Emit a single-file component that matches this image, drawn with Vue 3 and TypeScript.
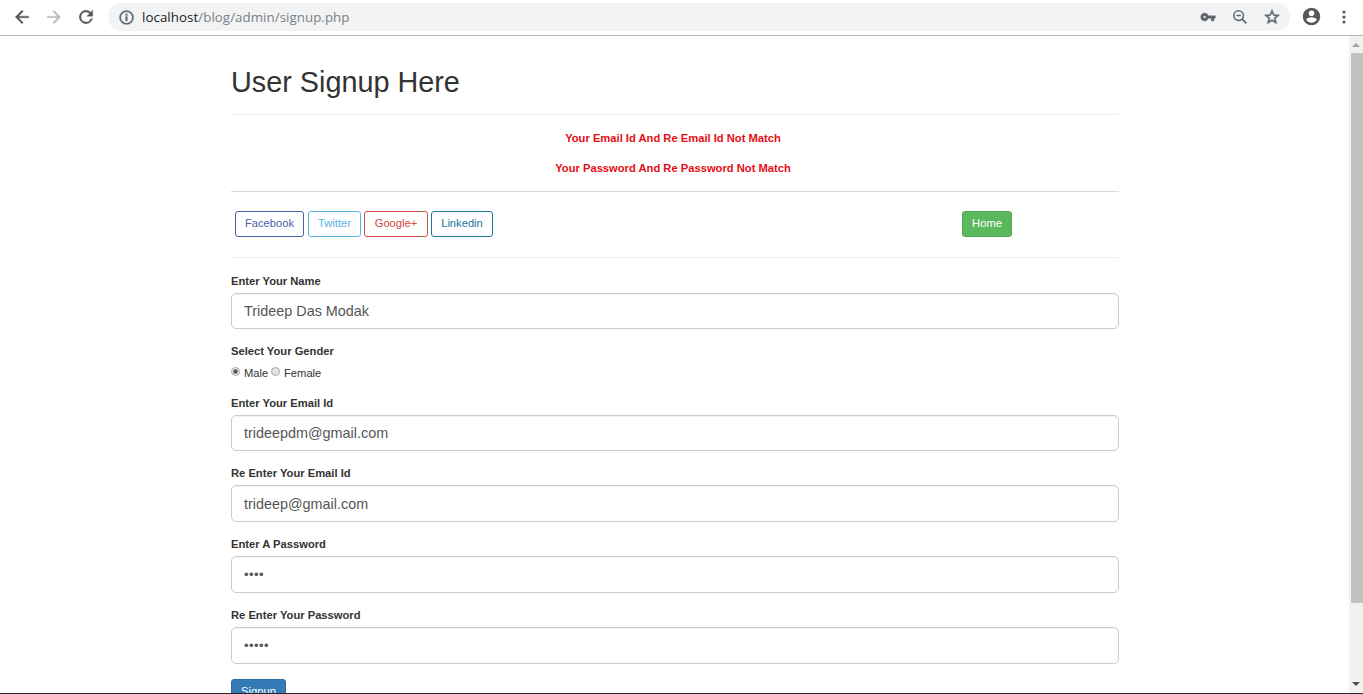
<script setup lang="ts">
import { ref } from 'vue'

interface Social {
  label: string
  kind: string
}

const socials: Social[] = [
  { label: 'Facebook', kind: 'facebook' },
  { label: 'Twitter', kind: 'twitter' },
  { label: 'Google+', kind: 'google' },
  { label: 'Linkedin', kind: 'linkedin' },
]

const fullName = ref('Trideep Das Modak')
const gender = ref('male')
const email = ref('trideepdm@gmail.com')
const emailAgain = ref('trideep@gmail.com')
const password = '••••'
const passwordAgain = '•••••'
</script>

<template>
  <div class="window">
    <header class="toolbar">
      <svg class="nav" viewBox="0 0 24 24"><path fill="#54575b" d="M20 11H7.8l5.6-5.6L12 4l-8 8 8 8 1.4-1.4L7.8 13H20z" stroke="#54575b" stroke-width=".5" /></svg>
      <svg class="nav fwd" viewBox="0 0 24 24"><path fill="#b9bbbe" stroke="#b9bbbe" stroke-width=".4" d="M4 11h12.2l-5.6-5.6L12 4l8 8-8 8-1.4-1.4 5.6-5.6H4z" /></svg>
      <svg class="nav reload" viewBox="0 0 24 24"><path fill="#54575b" stroke="#54575b" stroke-width=".5" d="M17.65 6.35A8 8 0 1 0 19.73 14h-2.08A6 6 0 1 1 12 6c1.66 0 3.14.69 4.22 1.78L13 11h7V4z" /></svg>
      <div class="address">
        <svg class="info" viewBox="0 0 24 24"><path fill="#5f6368" stroke="#5f6368" stroke-width=".4" d="M10.8 10.6h2.4v6.4h-2.4zM10.8 6.8h2.4v2.4h-2.4zM12 2a10 10 0 1 0 0 20 10 10 0 0 0 0-20zm0 18a8 8 0 1 1 0-16 8 8 0 0 1 0 16z" /></svg>
        <span class="url"><b>localhost</b>/blog/admin/signup.php</span>
        <svg class="key" viewBox="0 0 24 24"><path fill="#5f6368" stroke="#5f6368" stroke-width=".5" d="M12.65 10A6 6 0 1 0 12.65 14H17v4h4v-4h2v-4zM7 14a2 2 0 1 1 0-4 2 2 0 0 1 0 4z" /></svg>
        <svg class="mag" viewBox="0 0 16 16"><g fill="none" stroke="#5f6368" stroke-width="1.5"><circle cx="6.6" cy="6.6" r="4.8" /><path d="m10.1 10.1 4.3 4.3M4.4 6.6h4.4" /></g></svg>
        <svg class="star" viewBox="0 0 24 24"><path fill="#5f6368" stroke="#5f6368" stroke-width=".6" d="m22 9.24-7.19-.62L12 2 9.19 8.63 2 9.24l5.46 4.73L5.82 21 12 17.27 18.18 21l-1.63-7.03zM12 15.4l-3.76 2.27 1-4.28-3.32-2.88 4.38-.38L12 6.1l1.71 4.04 4.38.38-3.32 2.88 1 4.28z" /></svg>
      </div>
      <svg class="avatar" viewBox="0 0 24 24"><path fill="#54575b" d="M12 2a10 10 0 1 0 0 20 10 10 0 0 0 0-20zm0 3a3.2 3.2 0 1 1 0 6.4A3.2 3.2 0 0 1 12 5zm0 14.2a7.2 7.2 0 0 1-6-3.22c.03-1.99 4-3.08 6-3.08s5.97 1.09 6 3.08a7.2 7.2 0 0 1-6 3.22z" /></svg>
      <svg class="more" viewBox="0 0 4 14"><g fill="#54575b"><circle cx="2" cy="2" r="1.6" /><circle cx="2" cy="7" r="1.6" /><circle cx="2" cy="12" r="1.6" /></g></svg>
    </header>

    <div class="viewport">
      <main class="page">
        <h1><span>User Signup Here</span></h1>
        <div class="errors">
          <p>Your Email Id And Re Email Id Not Match</p>
          <p>Your Password And Re Password Not Match</p>
        </div>
        <div class="links">
          <div class="socials">
            <button v-for="s in socials" :key="s.kind" type="button" class="btn" :class="s.kind">{{ s.label }}</button>
          </div>
          <button type="button" class="btn home">Home</button>
        </div>
        <form @submit.prevent>
          <div class="group name">
            <label>Enter Your Name</label>
            <input v-model="fullName" class="control" type="text" />
          </div>
          <div class="group gender">
            <label>Select Your Gender</label>
            <div class="radios">
              <i class="radio" :class="{ on: gender === 'male' }" @click="gender = 'male'"></i><span class="male">Male</span>
              <i class="radio" :class="{ on: gender === 'female' }" @click="gender = 'female'"></i><span>Female</span>
            </div>
          </div>
          <div class="group email">
            <label>Enter Your Email Id</label>
            <input v-model="email" class="control" type="text" />
          </div>
          <div class="group email2">
            <label>Re Enter Your Email Id</label>
            <input v-model="emailAgain" class="control" type="text" />
          </div>
          <div class="group pass">
            <label>Enter A Password</label>
            <div class="control dots">{{ password }}</div>
          </div>
          <div class="group pass2">
            <label>Re Enter Your Password</label>
            <div class="control dots">{{ passwordAgain }}</div>
          </div>
          <button type="submit" class="btn signup">Signup</button>
        </form>
      </main>
      <aside class="scrollbar">
        <svg class="arrow" viewBox="0 0 14 17"><path fill="#a3a3a3" d="M3 11h8L7 7z" /></svg>
        <div class="thumb"></div>
        <svg class="arrow down" viewBox="0 0 14 17"><path fill="#505050" d="M3 6h8l-4 4z" /></svg>
      </aside>
    </div>
    <div class="edge"></div>
  </div>
</template>

<style>
body {
  margin: 0;
  overflow: hidden;
}
</style>

<style scoped>
* {
  box-sizing: border-box;
}
.window {
  width: 1363px;
  height: 694px;
  display: flex;
  flex-direction: column;
  overflow: hidden;
  background: #fff;
  color: #333;
  font-family: 'Liberation Sans', Arial, sans-serif;
  font-size: 11.2px;
}
svg {
  display: block;
  flex: none;
}
.toolbar {
  flex: none;
  height: 36px;
  border-bottom: 1px solid #b4b5b7;
  display: flex;
  align-items: flex-start;
  padding: 3px 0 0 12px;
}
.nav {
  width: 20px;
  height: 20px;
  margin: 4px 12px 0 0;
}
.reload {
  margin-right: 12px;
}
.address {
  width: 1182px;
  height: 28px;
  border-radius: 14px;
  background: #f1f3f4;
  display: flex;
  align-items: center;
}
.info {
  width: 17px;
  height: 17px;
  margin-left: 9.5px;
}
.url {
  flex: 1;
  margin-left: 7.5px;
  font-family: 'Open Sans', 'Noto Sans', sans-serif;
  font-size: 13.3px;
  letter-spacing: 0.06px;
  line-height: 28px;
  color: #7b7f83;
  white-space: nowrap;
}
.url b {
  font-weight: 400;
  color: #202124;
}
.key {
  width: 16px;
  height: 16px;
}
.mag {
  width: 16px;
  height: 16px;
  margin-left: 16px;
}
.star {
  width: 18px;
  height: 18px;
  margin: 0 9px 0 15px;
}
.avatar {
  width: 21px;
  height: 21px;
  margin: 3px 0 0 11px;
}
.more {
  width: 4px;
  height: 14px;
  margin: 7px 0 0 20px;
}
.viewport {
  flex: 1;
  min-height: 0;
  display: flex;
  overflow: hidden;
}
.page {
  flex: 1;
  padding-left: 231px;
}
.page > * {
  width: 888px;
}
h1 {
  margin: 0;
  height: 79px;
  padding-top: 30px;
  border-bottom: 1px solid #eee;
  font-size: 28.8px;
  font-weight: 400;
  line-height: 32px;
}
.errors {
  height: 77px;
  padding-top: 15px;
  border-bottom: 1px solid #d9d9d9;
  text-align: center;
  font-weight: 700;
  color: #e60d14;
}
.errors p {
  margin: 0 4px 14px 0;
  line-height: 16px;
  white-space: nowrap;
}
.links {
  height: 66px;
  padding: 19px 107px 0 4px;
  border-bottom: 1px solid #eee;
  display: flex;
  justify-content: space-between;
  align-items: flex-start;
}
.socials {
  display: flex;
}
.btn {
  height: 26px;
  padding: 0 0 2px;
  border: 1px solid;
  border-radius: 3px;
  background: #fff;
  font: 11.2px/22px 'Liberation Sans', Arial, sans-serif;
  text-align: center;
}
.facebook {
  width: 69px;
  color: #4c5fa5;
  margin-right: 4px;
}
.twitter {
  width: 53px;
  color: #55b5e0;
  margin-right: 3px;
}
.google {
  width: 64px;
  color: #cf4a41;
  margin-right: 3px;
}
.linkedin {
  width: 62px;
  color: #1a789c;
}
.home {
  width: 50px;
  background: #5cb85c;
  border-color: #4cae4c;
  color: #fff;
}
.group label {
  display: block;
  height: 20px;
  line-height: 16px;
  font-weight: 700;
  white-space: nowrap;
}
.control {
  display: block;
  width: 100%;
  height: 36px;
  padding: 0 12px;
  border: 1px solid #ccc;
  border-radius: 5px;
  background: #fff;
  box-shadow: inset 0 1px 1px rgba(0, 0, 0, 0.06);
  outline: none;
  font: 14.4px/34px 'Liberation Sans', Arial, sans-serif;
  color: #555;
}
form {
  padding-top: 15px;
}
.name {
  height: 70px;
}
.gender {
  height: 52px;
}
.email {
  height: 70px;
}
.email2,
.pass,
.pass2 {
  height: 71px;
}
.pass .control,
.pass2 .control,
.email2 .control {
  height: 37px;
}
.email2 .control {
  line-height: 35px;
}
.dots {
  font-size: 13px;
  letter-spacing: 0.45px;
  line-height: 36px;
}
.radios {
  display: flex;
  align-items: center;
  height: 16px;
  margin-top: 2px;
}
.radio {
  width: 9px;
  height: 9px;
  margin-bottom: 3px;
  border: 1px solid #a5a5a5;
  border-radius: 50%;
  background: #e4e4e4;
}
.radio.on {
  background: radial-gradient(circle, #555 0 1.8px, #e8e8e8 2.6px);
}
.radios span {
  margin-left: 4px;
}
.radios .male {
  width: 24px;
  margin-right: 3px;
}
.signup {
  display: block;
  width: 55px;
  margin-top: 1px;
  background: #337ab7;
  border-color: #2e6da4;
  color: #fff;
}
.scrollbar {
  width: 14px;
  background: #f1f1f1;
  display: flex;
  flex-direction: column;
}
.arrow {
  width: 14px;
  height: 17px;
}
.thumb {
  height: 550px;
  margin-left: 2px;
  background: #c1c1c1;
}
.down {
  margin-top: auto;
}
.edge {
  flex: none;
  height: 1px;
  background: #25272b;
}
</style>
